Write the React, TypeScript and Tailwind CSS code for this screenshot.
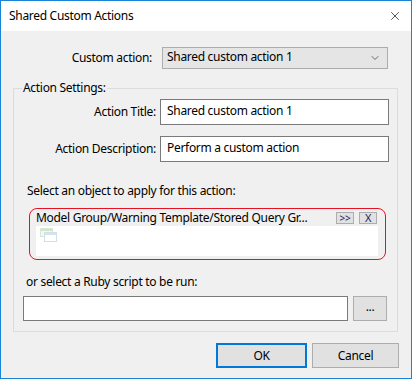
import { ChevronDown, X } from 'lucide-react';

function TextBox({ value, className }: { value?: string; className: string }) {
    return (
        <div className={`bg-white border border-[#7a7a7a] flex items-center pl-[6px] pb-[2px] ${className}`}>
            {value}
        </div>
    );
}

function WindowsIcon() {
    return (
        <svg width="17" height="14" viewBox="0 0 17 14">
            <rect x="0.5" y="0.5" width="12" height="8" fill="#f4f8f4" stroke="#d8e8d8" />
            <rect x="1" y="1" width="11" height="2" fill="#cfe6c8" />
            <rect x="4.5" y="4.5" width="12" height="9" fill="#ffffff" stroke="#d4dee8" />
            <rect x="5" y="5" width="11" height="2" fill="#d3e3f2" />
        </svg>
    );
}

export default function App() {
    return (
        <div
            className="w-[412px] h-[379px] border border-[#1883d7] bg-[#f0f0f0] flex flex-col text-[12px] tracking-[-0.3px] text-black overflow-hidden"
            style={{ fontFamily: '"Segoe UI", "Noto Sans", sans-serif' }}
        >
            <div className="h-[30px] bg-white flex items-center justify-between pl-[8px] pr-[9px]">
                <span className="text-[12px]">Shared Custom Actions</span>
                <X size={14} strokeWidth={1.3} className="text-[#222]" />
            </div>

            <div className="flex items-center mt-[16px]">
                <div className="w-[151px] text-right">Custom action:</div>
                <div className="ml-[10px] w-[226px] h-[22px] bg-[#e5e5e5] border border-[#adadad] flex items-center justify-between pl-[4px] pr-[6px]">
                    <span className="pb-[2px]">Shared custom action 1</span>
                    <ChevronDown size={12} strokeWidth={1.4} className="text-[#333]" />
                </div>
            </div>

            <div className="relative ml-[12px] mt-[19px] w-[385px] h-[244px] border border-[#dcdcdc] flex flex-col">
                <span className="absolute -top-[9px] left-[8px] px-[1px] bg-[#f0f0f0] leading-[16px]">Action Settings:</span>

                <div className="flex items-center mt-[10px]">
                    <div className="w-[142px] text-right">Action Title:</div>
                    <TextBox value="Shared custom action 1" className="ml-[4px] w-[229px] h-[26px]" />
                </div>
                <div className="flex items-center mt-[11px]">
                    <div className="w-[142px] text-right">Action Description:</div>
                    <TextBox value="Perform a custom action" className="ml-[4px] w-[229px] h-[26px]" />
                </div>

                <div className="ml-[13px] mt-[21px] leading-[16px]">Select an object to apply for this action:</div>

                <div className="ml-[15px] mt-[9px] w-[357px] h-[52px] border border-[#e81123] rounded-[8px] flex flex-col pl-[6px] pr-[7px] pb-[3px]">
                    <div className="h-[17px] flex items-center justify-between">
                        <span className="leading-[16px]">Model Group/Warning Template/Stored Query Gr...</span>
                        <div className="flex items-center gap-[5px] mr-[1px]">
                            <div className="w-[18px] h-[12px] bg-[#e1e1e1] border border-[#adadad] flex items-center justify-center text-[10px] leading-none text-[#1a1a5a]">&gt;&gt;</div>
                            <div className="w-[18px] h-[12px] bg-[#e1e1e1] border border-[#adadad] flex items-center justify-center text-[11px] leading-none text-[#1a1a5a]">X</div>
                        </div>
                    </div>
                    <div className="flex-1 bg-white pl-[4px] pt-[2px]">
                        <WindowsIcon />
                    </div>
                </div>

                <div className="ml-[12px] mt-[14px] leading-[16px]">or select a Ruby script to be run:</div>
                <div className="flex items-center ml-[9px] mt-[6px]">
                    <TextBox className="w-[325px] h-[25px]" />
                    <div className="ml-[5px] w-[34px] h-[25px] bg-[#e1e1e1] border border-[#adadad] flex items-center justify-center pb-[4px]">...</div>
                </div>
            </div>

            <div className="flex justify-end gap-[5px] mt-[11px] pr-[12px]">
                <div className="w-[91px] h-[25px] bg-[#e1e1e1] border-2 border-[#0078d7] flex items-center justify-center">OK</div>
                <div className="w-[87px] h-[25px] bg-[#e1e1e1] border border-[#adadad] flex items-center justify-center">Cancel</div>
            </div>
        </div>
    );
}
